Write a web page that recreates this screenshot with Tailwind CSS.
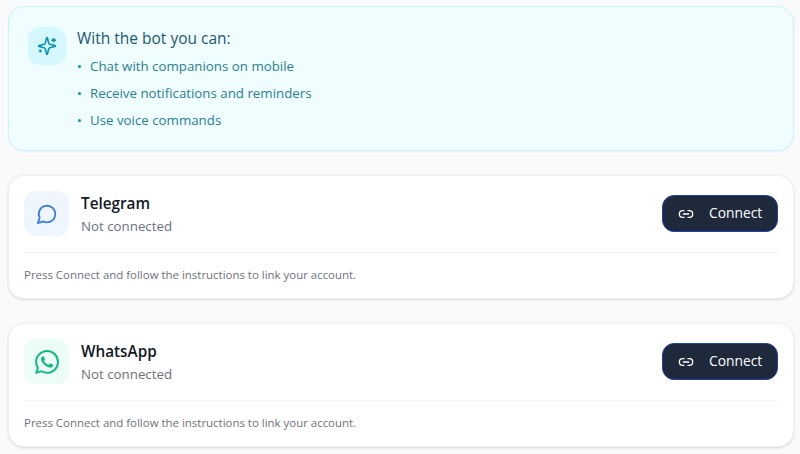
<!DOCTYPE html>
<html><head><meta charset="utf-8"><script src="https://cdn.jsdelivr.net/npm/@tailwindcss/browser@4"></script></head>
<body class="bg-[#f8fafc] font-['Open_Sans',sans-serif] w-[800px] h-[454px] overflow-hidden">
<div class="flex flex-col gap-6 pl-2 pr-1.5 pt-[6px]">
  <section class="h-[145px] rounded-2xl border border-[#c9f3fa] bg-[#effdff] pl-[19px] pt-5 flex gap-[11px] shadow-xs">
    <div class="w-[38px] h-[38px] rounded-xl bg-[#d5f8fd] flex items-center justify-center shrink-0">
      <svg class="w-5 h-5 text-[#0e94b5]" viewBox="0 0 24 24" fill="none" stroke="currentColor" stroke-width="2" stroke-linecap="round" stroke-linejoin="round"><path d="M9.94 15.5A2 2 0 0 0 8.5 14.06l-6.14-1.58a.5.5 0 0 1 0-.96L8.5 9.94A2 2 0 0 0 9.94 8.5l1.58-6.14a.5.5 0 0 1 .96 0L14.06 8.5A2 2 0 0 0 15.5 9.94l6.14 1.58a.5.5 0 0 1 0 .96L15.5 14.06a2 2 0 0 0-1.44 1.44l-1.58 6.14a.5.5 0 0 1-.96 0z"/><path d="M20 3v4"/><path d="M22 5h-4"/><path d="M4 17v2"/><path d="M5 18H3"/></svg>
    </div>
    <div>
      <h2 class="text-[15.5px] leading-[22px] font-medium text-[#1d5870]">With the bot you can:</h2>
      <ul class="mt-1.5 flex flex-col gap-[5px] text-[13.3px] leading-[22px] text-[#2b7f93]">
        <li class="flex items-center"><span class="w-[3px] h-[3px] rounded-full bg-[#0891b2] ml-px mr-[9px]"></span>Chat with companions on mobile</li>
        <li class="flex items-center"><span class="w-[3px] h-[3px] rounded-full bg-[#0891b2] ml-px mr-[9px]"></span>Receive notifications and reminders</li>
        <li class="flex items-center"><span class="w-[3px] h-[3px] rounded-full bg-[#0891b2] ml-px mr-[9px]"></span>Use voice commands</li>
      </ul>
    </div>
  </section>

  <section class="h-[124px] rounded-2xl border border-[#eef0f3] bg-white px-[15px] pt-[15px] shadow-sm">
    <div class="flex items-center justify-between h-[45px]">
      <div class="flex items-center gap-3">
        <div class="w-[45px] h-[45px] rounded-xl bg-[#eff6ff] flex items-center justify-center">
          <svg class="w-[22px] h-[22px] text-[#3b7fe0]" viewBox="0 0 24 24" fill="none" stroke="currentColor" stroke-width="2" stroke-linecap="round" stroke-linejoin="round"><path d="M7.9 20A9 9 0 1 0 4 16.1L2 22Z"/></svg>
        </div>
        <div>
          <div class="text-[15.3px] leading-6 font-semibold text-[#111827]">Telegram</div>
          <div class="mt-px text-[13.3px] leading-5 text-[#6b7280]">Not connected</div>
        </div>
      </div>
      <button class="w-[116px] h-[37px] rounded-xl bg-[#1e293b] border border-[#1e40af] text-white text-[13.8px] font-medium flex items-center pl-[15px] gap-[15px]">
        <svg class="w-4 h-4" viewBox="0 0 24 24" fill="none" stroke="currentColor" stroke-width="2" stroke-linecap="round" stroke-linejoin="round"><path d="M9 17H7A5 5 0 0 1 7 7h2"/><path d="M15 7h2a5 5 0 1 1 0 10h-2"/><line x1="8" x2="16" y1="12" y2="12"/></svg>
        Connect
      </button>
    </div>
    <div class="mt-4 border-t border-[#f1f3f5] pt-[14px] text-[11.45px] leading-4 text-[#6b7280]">Press Connect and follow the instructions to link your account.</div>
  </section>

  <section class="h-[124px] rounded-2xl border border-[#eef0f3] bg-white px-[15px] pt-[15px] shadow-sm">
    <div class="flex items-center justify-between h-[45px]">
      <div class="flex items-center gap-3">
        <div class="w-[45px] h-[45px] rounded-xl bg-[#ecfdf5] flex items-center justify-center">
          <svg class="w-6 h-6 text-[#10b981]" viewBox="0 0 24 24" fill="currentColor"><path d="M17.47 14.38c-.3-.15-1.76-.87-2.03-.97-.27-.1-.47-.15-.67.15-.2.3-.77.97-.94 1.16-.17.2-.35.22-.64.07-.3-.15-1.26-.46-2.39-1.47-.88-.79-1.48-1.76-1.65-2.06-.17-.3-.02-.46.13-.61.13-.13.3-.35.45-.52.15-.17.2-.3.3-.5.1-.2.05-.37-.02-.52-.07-.15-.67-1.61-.92-2.21-.24-.58-.49-.5-.67-.51h-.57c-.2 0-.52.07-.79.37-.27.3-1.04 1.02-1.04 2.48s1.07 2.88 1.22 3.07c.15.2 2.1 3.2 5.08 4.49.71.31 1.26.49 1.69.63.71.23 1.36.2 1.87.12.57-.09 1.76-.72 2.01-1.41.25-.69.25-1.29.17-1.41-.07-.12-.27-.2-.57-.35zM12.05 21.79h-.01a9.87 9.87 0 0 1-5.03-1.38l-.36-.21-3.74.98 1-3.65-.24-.37a9.86 9.86 0 0 1-1.51-5.26c0-5.45 4.44-9.88 9.89-9.88 2.64 0 5.12 1.03 6.99 2.9a9.83 9.83 0 0 1 2.89 6.99c0 5.45-4.44 9.88-9.88 9.88zM20.46 3.49A11.82 11.82 0 0 0 12.05 0C5.5 0 .16 5.34.16 11.89c0 2.1.55 4.14 1.59 5.95L.06 24l6.3-1.65a11.88 11.88 0 0 0 5.68 1.45h.01c6.55 0 11.89-5.34 11.89-11.89a11.82 11.82 0 0 0-3.48-8.41z"/></svg>
        </div>
        <div>
          <div class="text-[15.3px] leading-6 font-semibold text-[#111827]">WhatsApp</div>
          <div class="mt-px text-[13.3px] leading-5 text-[#6b7280]">Not connected</div>
        </div>
      </div>
      <button class="w-[116px] h-[37px] rounded-xl bg-[#1e293b] border border-[#1e40af] text-white text-[13.8px] font-medium flex items-center pl-[15px] gap-[15px]">
        <svg class="w-4 h-4" viewBox="0 0 24 24" fill="none" stroke="currentColor" stroke-width="2" stroke-linecap="round" stroke-linejoin="round"><path d="M9 17H7A5 5 0 0 1 7 7h2"/><path d="M15 7h2a5 5 0 1 1 0 10h-2"/><line x1="8" x2="16" y1="12" y2="12"/></svg>
        Connect
      </button>
    </div>
    <div class="mt-4 border-t border-[#f1f3f5] pt-[14px] text-[11.45px] leading-4 text-[#6b7280]">Press Connect and follow the instructions to link your account.</div>
  </section>
</div>
</body></html>
